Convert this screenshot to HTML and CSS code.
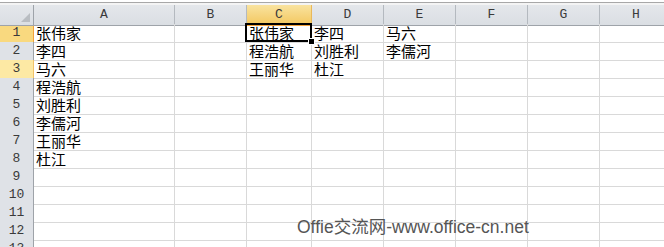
FILE: index.html
```html
<!DOCTYPE html>
<html>
<head>
<meta charset="utf-8">
<link rel="stylesheet" href="styles.css">
</head>
<body>
<div class="topbar"></div>
<div class="sheet">
  <div class="row head">
    <div class="corner"><span class="tri"></span></div>
    <div class="ch">A</div><div class="ch">B</div><div class="ch sel">C</div><div class="ch">D</div><div class="ch">E</div><div class="ch">F</div><div class="ch">G</div><div class="ch last">H</div>
  </div>
  <div class="row"><div class="rh act">1</div><div class="c">张伟家</div><div class="c"></div><div class="c">张伟家</div><div class="c">李四</div><div class="c">马六</div><div class="c"></div><div class="c"></div><div class="c last"></div></div>
  <div class="row"><div class="rh">2</div><div class="c">李四</div><div class="c"></div><div class="c">程浩航</div><div class="c">刘胜利</div><div class="c">李儒河</div><div class="c"></div><div class="c"></div><div class="c last"></div></div>
  <div class="row"><div class="rh hi">3</div><div class="c">马六</div><div class="c"></div><div class="c">王丽华</div><div class="c">杜江</div><div class="c"></div><div class="c"></div><div class="c"></div><div class="c last"></div></div>
  <div class="row"><div class="rh">4</div><div class="c">程浩航</div><div class="c"></div><div class="c"></div><div class="c"></div><div class="c"></div><div class="c"></div><div class="c"></div><div class="c last"></div></div>
  <div class="row"><div class="rh">5</div><div class="c">刘胜利</div><div class="c"></div><div class="c"></div><div class="c"></div><div class="c"></div><div class="c"></div><div class="c"></div><div class="c last"></div></div>
  <div class="row"><div class="rh">6</div><div class="c">李儒河</div><div class="c"></div><div class="c"></div><div class="c"></div><div class="c"></div><div class="c"></div><div class="c"></div><div class="c last"></div></div>
  <div class="row"><div class="rh">7</div><div class="c">王丽华</div><div class="c"></div><div class="c"></div><div class="c"></div><div class="c"></div><div class="c"></div><div class="c"></div><div class="c last"></div></div>
  <div class="row"><div class="rh">8</div><div class="c">杜江</div><div class="c"></div><div class="c"></div><div class="c"></div><div class="c"></div><div class="c"></div><div class="c"></div><div class="c last"></div></div>
  <div class="row"><div class="rh">9</div><div class="c"></div><div class="c"></div><div class="c"></div><div class="c"></div><div class="c"></div><div class="c"></div><div class="c"></div><div class="c last"></div></div>
  <div class="row"><div class="rh">10</div><div class="c"></div><div class="c"></div><div class="c"></div><div class="c"></div><div class="c"></div><div class="c"></div><div class="c"></div><div class="c last"></div></div>
  <div class="row"><div class="rh">11</div><div class="c"></div><div class="c"></div><div class="c"></div><div class="c"></div><div class="c"></div><div class="c"></div><div class="c"></div><div class="c last"></div></div>
  <div class="row"><div class="rh">12</div><div class="c"></div><div class="c"></div><div class="c"></div><div class="c"></div><div class="c"></div><div class="c"></div><div class="c"></div><div class="c last"></div></div>
  <div class="row"><div class="rh">13</div><div class="c"></div><div class="c"></div><div class="c"></div><div class="c"></div><div class="c"></div><div class="c"></div><div class="c"></div><div class="c last"></div></div>
  <div class="selbox"></div>
  <div class="handle"></div>
  <div class="watermark">Offie交流网-www.office-cn.net</div>
</div>
</body>
</html>
```

FILE: styles.css
```css
html, body {
  margin: 0;
  padding: 0;
  background: #fff;
  overflow: hidden;
  width: 664px;
  height: 247px;
}
.topbar {
  height: 5px;
  box-sizing: border-box;
  border-top: 2px solid #fff;
  border-bottom: 2px solid #f4f4f4;
  background: #a8a8a8;
}
.sheet {
  position: relative;
  width: 672px;
}
.row {
  display: grid;
  grid-template-columns: 34px 141px 72px 65px 72px 72px 72px 72px 72px;
  height: 18px;
}
.row.head {
  height: 19px;
}
.corner, .ch {
  box-sizing: border-box;
  background: linear-gradient(#e4e7eb, #dadee3);
  border-bottom: 1px solid #9ea3a9;
  border-right: 1px solid #b4b9bf;
  font-family: "Liberation Mono", monospace;
  font-size: 13px;
  color: #3a3a3a;
  text-align: center;
  line-height: 20px;
}
.corner {
  position: relative;
  border-right: 1px solid #9ea3a9;
}
.tri {
  position: absolute;
  right: 3px;
  bottom: 3px;
  width: 0;
  height: 0;
  border-left: 9px solid transparent;
  border-bottom: 9px solid #b9bdc2;
}
.ch.sel {
  background: linear-gradient(#f9e39f, #f3c75f);
  border-bottom: 1px solid #f2a23c;
  border-right: 1px solid #e9b85a;
}
.ch.last, .c.last {
  border-right: none;
}
.rh {
  box-sizing: border-box;
  background: #dfe2e7;
  border-right: 1px solid #9ea3a9;
  border-bottom: 1px solid #c4c8cd;
  font-family: "Liberation Mono", monospace;
  font-size: 13px;
  color: #3a3a3a;
  text-align: center;
  line-height: 18px;
}
.rh.act {
  background: #f9d97f;
  border-right: 1px solid #f2a23c;
  border-bottom: 1px solid #e9c26a;
}
.rh.hi {
  background: #fde9a4;
  border-right: 1px solid #f1c36a;
}
.c {
  box-sizing: border-box;
  border-right: 1px solid #d9d9d9;
  border-bottom: 1px solid #d9d9d9;
  padding-left: 2px;
  font-family: "Noto Sans CJK SC", sans-serif;
  font-size: 15px;
  line-height: 17px;
  color: #000;
  white-space: nowrap;
  overflow: visible;
}
.selbox {
  position: absolute;
  left: 245px;
  top: 18px;
  width: 67px;
  height: 19px;
  box-sizing: border-box;
  border: 2px solid #000;
}
.handle {
  position: absolute;
  left: 308px;
  top: 33px;
  width: 7px;
  height: 7px;
  box-sizing: border-box;
  background: #000;
  border: 1px solid #fff;
}
.watermark {
  position: absolute;
  left: 297px;
  top: 211px;
  font-family: "Liberation Sans", "Noto Sans CJK SC", sans-serif;
  font-size: 17.5px;
  line-height: 22px;
  color: #555;
  white-space: nowrap;
}
```
